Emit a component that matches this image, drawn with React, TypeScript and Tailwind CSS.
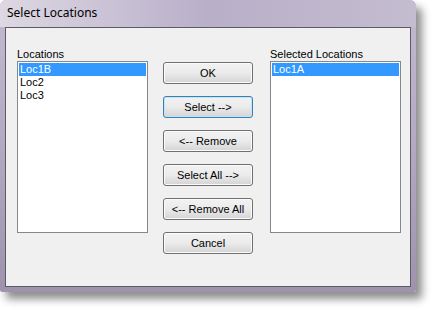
import type { ReactNode } from "react";

const font = { fontFamily: "'Liberation Sans', Arial, sans-serif" };

function ListBox({ items, selected }: { items: string[]; selected: number }) {
  return (
    <div className="w-[131px] h-[172px] border border-[#828790] bg-white p-px">
      {items.map((item, i) => (
        <div
          key={item}
          className={`h-[13px] leading-[13px] pl-[1px] text-[11px] ${
            i === selected ? "bg-[#3399ff] text-white" : "text-black"
          }`}
        >
          {item}
        </div>
      ))}
    </div>
  );
}

function Button({ children, focused }: { children: ReactNode; focused?: boolean }) {
  return (
    <button
      className={`w-[90px] h-[22px] rounded-[3px] border text-[11px] text-black leading-none bg-gradient-to-b from-[#f2f2f2] via-[#ebebeb] to-[#d4d4d4] ${
        focused ? "border-[#3c7fb1] shadow-[inset_0_0_0_1px_#bfe6f8]" : "border-[#707070] shadow-[inset_0_0_0_1px_#fbfbfb]"
      }`}
    >
      {children}
    </button>
  );
}

export default function App() {
  return (
    <div className="w-[432px] h-[310px] bg-white overflow-hidden" style={font}>
      <div className="w-[416px] h-[292px] rounded-t-[6px] rounded-b-[2px] bg-gradient-to-b from-[#c3bacf] via-[#b3a9c3] to-[#9f93ac] shadow-[6px_7px_9px_rgba(0,0,0,0.45)] flex flex-col">
        {/* Title bar */}
        <div className="h-[27px] flex items-center pl-[7px] rounded-t-[6px] bg-gradient-to-r from-[#ddd8e2] via-[#b9afc9] to-[#c4bccf]">
          <span className="text-[12px] text-black pb-[1px]" style={{ fontFamily: "'Noto Sans', 'Liberation Sans', sans-serif" }}>
            Select Locations
          </span>
        </div>

        {/* Client area */}
        <div className="mx-[5px] mb-[5px] flex-1 border border-[#5d5967] bg-[#f0f0f0] flex pl-[11px] pt-[20px]">
          <div className="flex flex-col">
            <div className="h-[13px] leading-[13px] text-[11px] text-black">Locations</div>
            <ListBox items={["Loc1B", "Loc2", "Loc3"]} selected={0} />
          </div>

          <div className="ml-[15px] pt-[14px] flex flex-col gap-[12px]">
            <Button>OK</Button>
            <Button focused>Select --&gt;</Button>
            <Button>&lt;-- Remove</Button>
            <Button>Select All --&gt;</Button>
            <Button>&lt;-- Remove All</Button>
            <Button>Cancel</Button>
          </div>

          <div className="ml-[17px] flex flex-col">
            <div className="h-[13px] leading-[13px] text-[11px] text-black">Selected Locations</div>
            <ListBox items={["Loc1A"]} selected={0} />
          </div>
        </div>
      </div>
    </div>
  );
}
